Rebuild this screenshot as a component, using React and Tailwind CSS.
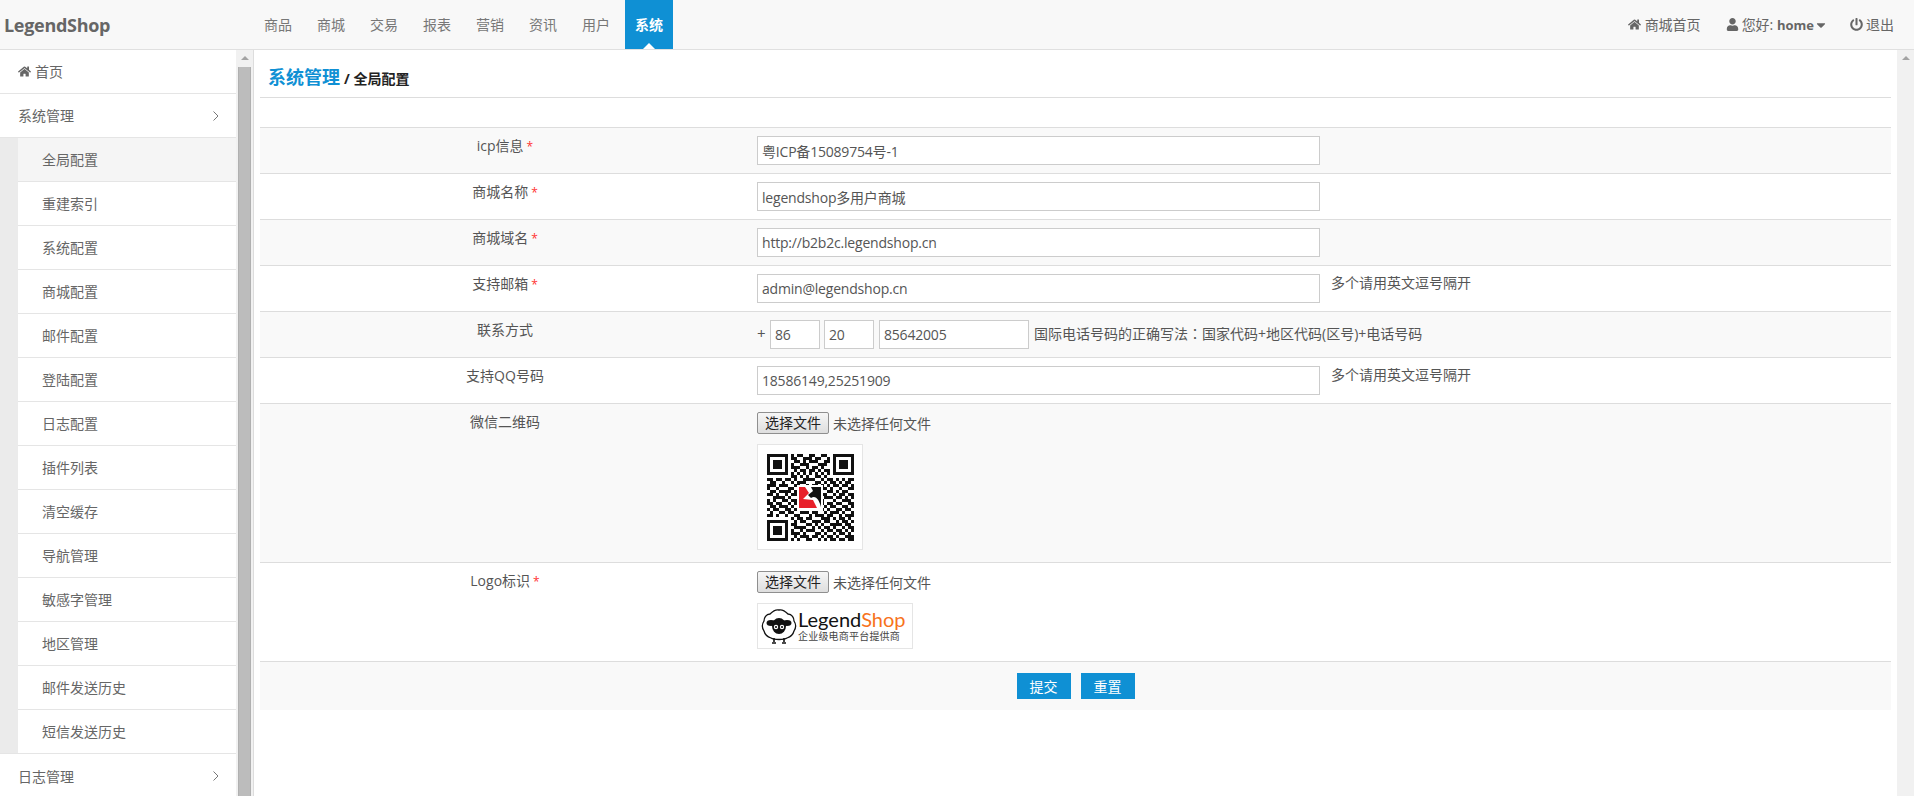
import { FaHome, FaUser, FaPowerOff, FaCaretDown } from "react-icons/fa";

const navItems = ["商品", "商城", "交易", "报表", "营销", "资讯", "用户"];
const subItems = [
  "全局配置",
  "重建索引",
  "系统配置",
  "商城配置",
  "邮件配置",
  "登陆配置",
  "日志配置",
  "插件列表",
  "清空缓存",
  "导航管理",
  "敏感字管理",
  "地区管理",
  "邮件发送历史",
  "短信发送历史",
];

const qrRows = [
  "11111110101100110011001111111",
  "10000010110011101100101000001",
  "10111010011010111001101011101",
  "10111010100111000111001011101",
  "10111010111001011010001011101",
  "10000010010110110101101000001",
  "11111110101010101010101111111",
  "00000000110101001101000000000",
  "11011011010011110010110101011",
  "01100100101110001101011010110",
  "11101110011001011010101101101",
  "10010001100100110011010010011",
  "01101111011010001100110101100",
  "11010010110001110011001011011",
  "00111101001110000101110110101",
  "10100110110100111010001001110",
  "11011001011011000110110110011",
  "01101110100101101001011001101",
  "10110011011010010110100110110",
  "01001101100111011001011101001",
  "11010010011000101110110010111",
  "00000000101101100011101011010",
  "11111110010110011101100101101",
  "10000010110001101010011110110",
  "10111010011110010101101001011",
  "10111010100101110010110110101",
  "10111010111010001101001011010",
  "10000010010111011010110100111",
  "11111110101001100101011011011",
];

const Chevron = () => (
  <svg width="6" height="10" viewBox="0 0 6 10" fill="none" stroke="#777" strokeWidth="1">
    <path d="M0.5 0.5L5 5L0.5 9.5" />
  </svg>
);

const ScrollTrack = ({ thumb }) => (
  <div className="w-[17px] shrink-0 bg-[#f1f1f1] flex flex-col items-center">
    <div className="mt-[6px] w-0 h-0 border-x-[4px] border-x-transparent border-b-[4px] border-b-[#a3a3a3]" />
    {thumb && <div className="mt-[7px] w-[13px] flex-1 bg-[#bcbcbc] border-x border-[#b0b0b0]" />}
  </div>
);

const QrCode = () => (
  <svg width="87" height="87" viewBox="0 0 87 87" shapeRendering="crispEdges">
    {qrRows.map((row, y) =>
      row.split("").map((c, x) =>
        c === "1" ? <rect key={`${x}-${y}`} x={x * 3} y={y * 3} width="3" height="3" fill="#111" /> : null
      )
    )}
    <rect x="30" y="31" width="26" height="26" fill="#fff" />
    <path d="M32 33H38L42 39L36 45L46 46L50 54H32Z" fill="#e8202a" shapeRendering="auto" />
    <path d="M44 33H54V53C52 46 49 41 44 44L41 41L46 37Z" fill="#111" shapeRendering="auto" />
  </svg>
);

const Sheep = () => (
  <svg width="36" height="36" viewBox="0 0 36 36">
    <path
      d="M18 2C22 1 25 4 27 6C31 6 33 10 33 13C35 16 35 20 33 23C32 27 29 29 26 30C23 32 13 32 10 30C7 29 4 27 3 23C1 20 1 16 3 13C3 10 5 6 9 6C11 4 14 1 18 2Z"
      fill="#fff"
      stroke="#111"
      strokeWidth="1.3"
    />
    <ellipse cx="18" cy="18" rx="7" ry="8" fill="#111" />
    <ellipse cx="10" cy="15" rx="4.5" ry="3" fill="#111" />
    <ellipse cx="26" cy="15" rx="4.5" ry="3" fill="#111" />
    <circle cx="15" cy="19" r="2.2" fill="#fff" />
    <circle cx="21" cy="19" r="2.2" fill="#fff" />
    <circle cx="15" cy="19" r="1.1" fill="#111" />
    <circle cx="21" cy="19" r="1.1" fill="#111" />
    <path d="M13 30V34M11 35H15M23 30V34M21 35H25" stroke="#111" strokeWidth="1.6" fill="none" />
  </svg>
);

const Row = ({ label, required, striped, children }) => (
  <div className={`flex border-t border-[#ddd] ${striped ? "bg-[#f9f9f9]" : "bg-white"}`}>
    <div className="w-[490px] shrink-0 pt-[8px] text-center leading-[20px] text-[#555]">
      {label}
      {required && <span className="ml-[3px] text-[12px] text-[#f33]">*</span>}
    </div>
    <div className="flex-1 pl-[7px] py-[8px]">{children}</div>
  </div>
);

const TextInput = ({ value, width = "w-[563px]" }) => (
  <input
    defaultValue={value}
    className={`${width} h-[29px] border border-[#ccc] bg-white px-[4px] tracking-[-0.2px] text-[#555] outline-none`}
  />
);

const Hint = ({ children }) => (
  <span className="ml-[11px] -mt-px leading-[20px] text-[#555]">{children}</span>
);

const FilePick = () => (
  <div className="flex items-center h-[22px]">
    <button className="w-[72px] h-[22px] rounded-[2px] border border-[#8f8f8f] bg-gradient-to-b from-[#f6f6f6] to-[#dedede] text-[#222] leading-none">
      选择文件
    </button>
    <span className="ml-[4px] text-[#555]">未选择任何文件</span>
  </div>
);

export default function App() {
  return (
    <div className="h-[796px] overflow-hidden flex flex-col bg-white text-[14px] font-['Open_Sans','Noto_Sans_CJK_SC',sans-serif]">
      {/* top bar */}
      <header className="h-[50px] shrink-0 flex border-b border-[#e0e0e0] bg-[#f8f8f8] text-[#777]">
        <div className="w-[254px] pl-[4px] pt-[13px] text-[18px] leading-[24px] font-bold tracking-[-0.3px] text-[#666]">
          LegendShop
        </div>
        <nav className="flex gap-[5px]">
          {navItems.map((item) => (
            <a key={item} className="px-[10px] leading-[49px]">
              {item}
            </a>
          ))}
          <a className="relative px-[10px] leading-[49px] bg-[#0f90d4] font-bold text-white">
            系统
            <span className="absolute left-1/2 bottom-0 -ml-[6px] w-0 h-0 border-x-[6px] border-x-transparent border-b-[6px] border-b-white" />
          </a>
        </nav>
        <div className="ml-auto flex items-center gap-[25px] pr-[20px] text-[#666]">
          <span className="flex items-center gap-[4px]">
            <FaHome size={13} />
            商城首页
          </span>
          <span className="flex items-center">
            <FaUser size={13} />
            <span className="ml-[3px]">
              您好: <b className="text-[13px]">home</b>
            </span>
            <FaCaretDown size={14} className="-mr-[3px]" />
          </span>
          <span className="flex items-center gap-[3px]">
            <FaPowerOff size={13} />
            退出
          </span>
        </div>
      </header>

      <div className="flex flex-1 min-h-0">
        {/* side menu */}
        <aside className="flex shrink-0 border-r border-[#ddd]">
          <div className="w-[236px] overflow-hidden text-[#666]">
            <div className="h-[44px] flex items-center gap-[4px] pl-[18px] border-b border-[#e5e5e5]">
              <FaHome size={13} />
              首页
            </div>
            <div className="h-[44px] flex items-center justify-between pl-[18px] pr-[17px] border-b border-[#e5e5e5]">
              系统管理
              <Chevron />
            </div>
            <div className="pl-[18px] bg-[#ebebeb] border-b border-[#e5e5e5]">
              {subItems.map((item, i) => (
                <div
                  key={item}
                  className={`flex items-center pl-[24px] ${
                    i === 13 ? "h-[43px]" : "h-[44px] border-b border-[#e5e5e5]"
                  } ${i === 0 ? "bg-[#f5f5f5]" : "bg-white"}`}
                >
                  {item}
                </div>
              ))}
            </div>
            <div className="h-[44px] flex items-center justify-between pl-[18px] pr-[17px]">
              日志管理
              <Chevron />
            </div>
          </div>
          <ScrollTrack thumb />
        </aside>

        {/* main */}
        <main className="flex-1 min-w-0 pl-[6px] pr-[6px]">
          <div className="h-[48px] pl-[8px] flex items-baseline pt-[14px] border-b border-[#ddd]">
            <span className="text-[18px] leading-[26px] font-bold text-[#0f90d4]">系统管理</span>
            <span className="ml-[4px] font-bold text-[#222]">/ 全局配置</span>
          </div>
          <div className="mt-[29px]">
            <Row label="icp信息" required striped>
              <TextInput value="粤ICP备15089754号-1" />
            </Row>
            <Row label="商城名称" required>
              <TextInput value="legendshop多用户商城" />
            </Row>
            <Row label="商城域名" required striped>
              <TextInput value="http://b2b2c.legendshop.cn" />
            </Row>
            <Row label="支持邮箱" required>
              <div className="flex items-start">
                <TextInput value="admin@legendshop.cn" />
                <Hint>多个请用英文逗号隔开</Hint>
              </div>
            </Row>
            <Row label="联系方式" striped>
              <div className="flex items-start">
                <span className="mt-[3px] w-[13px] text-[15px] leading-[20px] text-[#555]">+</span>
                <TextInput value="86" width="w-[50px]" />
                <span className="w-[4px]" />
                <TextInput value="20" width="w-[50px]" />
                <span className="w-[5px]" />
                <TextInput value="85642005" width="w-[150px]" />
                <span className="ml-[5px] mt-[3px] leading-[20px] text-[#555]">
                  国际电话号码的正确写法<span className="font-['Noto_Sans_CJK_TC',sans-serif]">：</span>
                  国家代码+地区代码(区号)+电话号码
                </span>
              </div>
            </Row>
            <Row label="支持QQ号码">
              <div className="flex items-start">
                <TextInput value="18586149,25251909" />
                <Hint>多个请用英文逗号隔开</Hint>
              </div>
            </Row>
            <Row label="微信二维码" striped>
              <FilePick />
              <div className="mt-[10px] mb-[4px] w-[106px] h-[106px] flex items-center justify-center border border-[#e5e5e5] bg-white">
                <QrCode />
              </div>
            </Row>
            <Row label="Logo标识" required>
              <FilePick />
              <div className="mt-[10px] mb-[4px] w-[156px] h-[46px] flex items-center gap-[1px] pl-[3px] border border-[#e5e5e5] bg-white overflow-hidden">
                <Sheep />
                <div className="flex flex-col">
                  <span className="text-[20px] leading-[20px] font-['Lato',sans-serif] text-[#111]">
                    Legend<span className="text-[#f7731c]">Shop</span>
                  </span>
                  <span className="text-[10px] leading-[14px] tracking-[0.2px] text-[#444]">企业级电商平台提供商</span>
                </div>
              </div>
            </Row>
            <div className="flex justify-center gap-[10px] h-[49px] pt-[11px] border-t border-[#ddd] bg-[#f9f9f9]">
              <button className="w-[54px] h-[26px] bg-[#0f90d4] text-white">提交</button>
              <button className="w-[54px] h-[26px] bg-[#0f90d4] text-white">重置</button>
            </div>
          </div>
        </main>
        <ScrollTrack />
      </div>
    </div>
  );
}
